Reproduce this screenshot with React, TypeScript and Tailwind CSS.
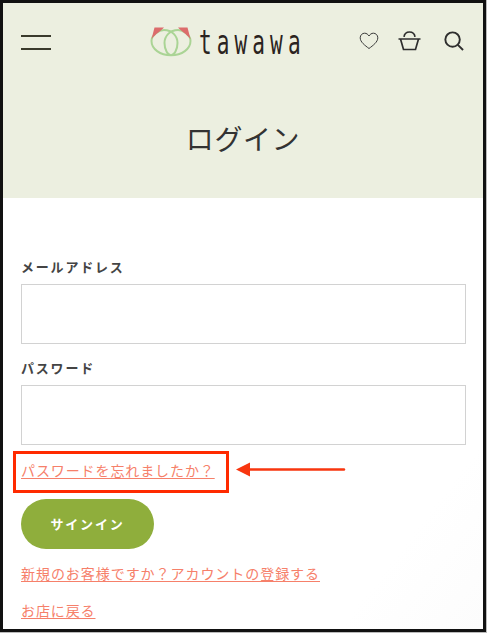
const jp = { fontFamily: '"Noto Sans CJK JP", sans-serif' };

function Logo() {
  return (
    <div className="flex items-center gap-[7px]">
      <svg width="42" height="30" viewBox="0 0 42 30" fill="none">
        <path d="M21 28.2 C10 28.2 1.5 22 1.5 14 C1.5 8 9 3 14 3 C22 3 27.5 9 27.5 16 C27.5 23 24 28.2 21 28.2 C18 28.2 14.5 23 14.5 16 C14.5 9 20 3 28 3 C33 3 40.5 8 40.5 14 C40.5 22 32 28.2 21 28.2 Z" stroke="#aad495" strokeWidth="2" />
        <path d="M4.5 0.5 H14 C11 4 6 6.5 1.5 12 Z" fill="#dc6c6c" />
        <path d="M37.5 0.5 H28 C31 4 36 6.5 40.5 12 Z" fill="#dc6c6c" />
      </svg>
      <span className="block w-[100px] h-[34px] overflow-visible">
        <span className="block origin-left scale-x-[0.62] text-[34px] leading-[34px] text-[#2a2320] tracking-[8.2px] whitespace-nowrap" style={{ fontFamily: '"DejaVu Sans Mono", monospace' }}>tawawa</span>
      </span>
    </div>
  );
}

function Field({ label }: { label: string }) {
  return (
    <label className="block">
      <span className="block text-[13px] font-bold leading-[18px] tracking-[1.8px] text-[#444] mb-[8px]">{label}</span>
      <input className="block w-full h-[60px] border border-[#d2d2d2] bg-white" />
    </label>
  );
}

export default function App() {
  return (
    <div className="relative w-[487px] h-[633px] overflow-hidden bg-[#bbb]" style={jp}>
      <div className="w-[486px] h-[632px] border-[3px] border-[#111] flex flex-col bg-gradient-to-br from-white from-85% to-[#fcfcfc]">
        <div className="bg-[#ecefe0] h-[195px] flex flex-col shrink-0">
          <header className="h-[79px] pl-[18px] pr-[19px] flex items-center justify-between">
            <div className="w-[30px] flex flex-col gap-[11px]">
              <span className="block h-[2px] bg-[#3a3a2c]" />
              <span className="block h-[2px] bg-[#3a3a2c]" />
            </div>
            <div className="ml-[38px] mt-[-2px]"><Logo /></div>
            <div className="flex items-center mt-[-3px]">
              <svg width="20" height="18" viewBox="0 0 20 18" fill="none">
                <path d="M10 16.5 C6 13.5 1.2 10 1.2 5.8 C1.2 3 3.4 1.2 5.6 1.2 C7.6 1.2 9 2.4 10 4 C11 2.4 12.4 1.2 14.4 1.2 C16.6 1.2 18.8 3 18.8 5.8 C18.8 10 14 13.5 10 16.5 Z" stroke="#3a3a3a" strokeWidth="1" />
              </svg>
              <svg width="23" height="20" viewBox="0 0 23 20" fill="none" stroke="#2e2e2e" strokeWidth="1.7" className="ml-[19px]">
                <path d="M6 5.8 C6.5 2.5 9 1 11.5 1 C14 1 16.5 2.5 17 5.8" />
                <path d="M0.5 8 H22.5 M2.5 8 L5.5 18.5 H17.5 L20.5 8" />
              </svg>
              <svg width="20" height="20" viewBox="0 0 21 21" fill="none" stroke="#2e2e2e" strokeWidth="2" className="ml-[23px]">
                <circle cx="9" cy="9" r="7.6" />
                <path d="M14.5 14.5 L20 20" />
              </svg>
            </div>
          </header>
          <h1 className="text-center text-[28px] leading-[40px] font-normal text-[#333] mt-[36px] tracking-[0.6px]">ログイン</h1>
        </div>
        <main className="relative flex-1 pl-[18px] pr-[17px] pt-[60px]">
          <Field label="メールアドレス" />
          <div className="h-[15px]" />
          <Field label="パスワード" />
          <a className="block mt-[16px] text-[14px] leading-[18px] tracking-[0.9px] text-[#f6806a] underline underline-offset-2">パスワードを忘れましたか？</a>
          <button className="block mt-[20px] w-[133px] h-[50px] rounded-full bg-[#8fae3c] text-white text-[13px] font-bold tracking-[1.8px]">サインイン</button>
          <a className="block mt-[15px] text-[14px] leading-[18px] tracking-[0.95px] text-[#f6806a] underline underline-offset-2">新規のお客様ですか？アカウントの登録する</a>
          <a className="block mt-[19px] text-[14px] leading-[18px] tracking-[0.9px] text-[#f6806a] underline underline-offset-2">お店に戻る</a>
          <div className="absolute left-[10px] top-[253px] w-[216px] h-[42px] border-[3px] border-[#ff2a00]" />
          <svg className="absolute left-[232px] top-[262px]" width="112" height="20" viewBox="0 0 112 20" fill="none">
            <path d="M14 9.5 H109" stroke="#f8360f" strokeWidth="2.4" strokeLinecap="round" />
            <path d="M1 9.5 L15 2.5 V16.5 Z" fill="#f8360f" />
          </svg>
        </main>
      </div>
    </div>
  );
}
